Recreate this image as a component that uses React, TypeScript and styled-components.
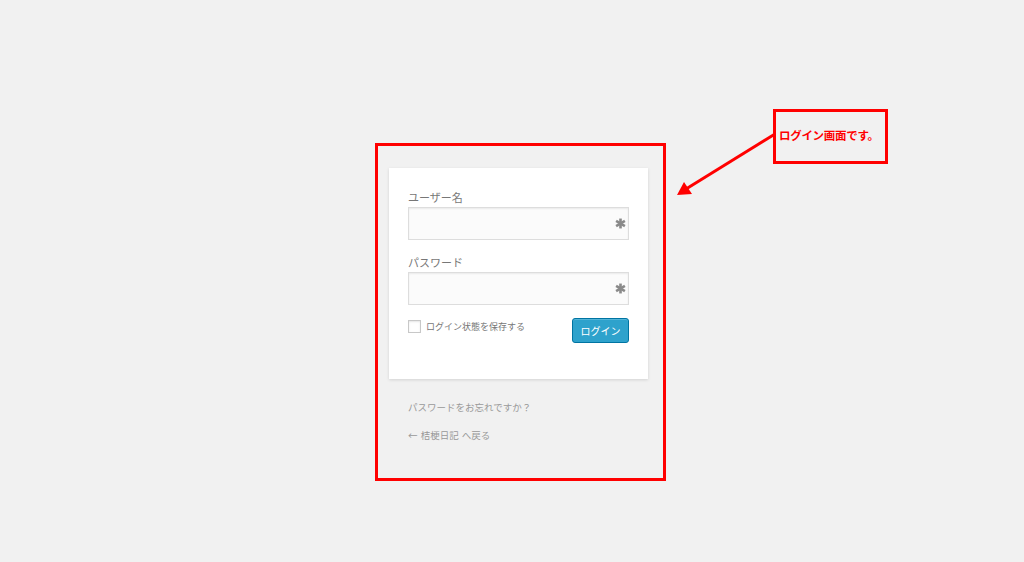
import React from "react";
import styled, { createGlobalStyle } from "styled-components";

const GlobalStyle = createGlobalStyle`
  html, body {
    margin: 0;
    padding: 0;
    background: #f1f1f1;
  }
  body {
    font-family: "Noto Sans CJK JP", "Noto Sans", sans-serif;
  }
`;

const Page = styled.div`
  position: relative;
  width: 1024px;
  height: 562px;
  box-sizing: border-box;
  padding: 143px 0 0 375px;
  background: #f1f1f1;
  overflow: hidden;
`;

const Frame = styled.div`
  width: 291px;
  height: 338px;
  box-sizing: border-box;
  border: 3px solid #ff0000;
  padding: 22px 0 0 11px;
`;

const Card = styled.form`
  width: 259px;
  box-sizing: border-box;
  padding: 22px 19px 36px;
  background: #fff;
  box-shadow: 0 1px 3px rgba(0, 0, 0, 0.13);
  display: flex;
  flex-direction: column;
`;

const Label = styled.label<{ $gap?: number }>`
  display: block;
  margin-top: ${(p) => p.$gap ?? 0}px;
  margin-bottom: 3px;
  font-size: 11px;
  line-height: 14px;
  color: #777;
`;

const Field = styled.div`
  position: relative;
  height: 33px;
`;

const Input = styled.input`
  width: 100%;
  height: 100%;
  box-sizing: border-box;
  margin: 0;
  border: 1px solid #ddd;
  background: #fbfbfb;
  box-shadow: inset 0 1px 2px rgba(0, 0, 0, 0.07);
  outline: none;
`;

const Key = styled.svg`
  position: absolute;
  right: 3px;
  top: 11px;
  width: 11px;
  height: 11px;
`;

const Row = styled.div`
  margin-top: 13px;
  display: flex;
  justify-content: space-between;
  align-items: flex-start;
`;

const Remember = styled.label`
  display: flex;
  align-items: center;
  gap: 5px;
  margin-top: 2px;
  font-size: 9px;
  line-height: 13px;
  color: #777;
`;

const Box = styled.span`
  width: 13px;
  height: 13px;
  box-sizing: border-box;
  border: 1px solid #c8c8c8;
  background: #fff;
  box-shadow: inset 0 1px 2px rgba(0, 0, 0, 0.1);
`;

const Button = styled.button`
  width: 57px;
  height: 25px;
  padding: 0;
  border: 1px solid #0074a2;
  border-radius: 3px;
  background: #2ea2cc;
  box-shadow: inset 0 1px 0 rgba(120, 200, 230, 0.5);
  color: #fff;
  font-family: inherit;
  font-size: 10px;
  cursor: pointer;
`;

const Links = styled.div`
  display: flex;
  flex-direction: column;
  gap: 14px;
  margin-top: 21px;
  padding-left: 19px;
`;

const NavLink = styled.a`
  font-size: 9.5px;
  line-height: 14px;
  color: #999;
  text-decoration: none;
  word-spacing: 1px;
`;

const Callout = styled.div`
  position: absolute;
  left: 773px;
  top: 109px;
  width: 115px;
  height: 55px;
  box-sizing: border-box;
  border: 3px solid #ff0000;
  padding: 16px 0 0 3px;
  font-size: 11.5px;
  font-weight: bold;
  line-height: 14px;
  color: #ff0000;
  letter-spacing: -0.3px;
  white-space: nowrap;
`;

const Arrow = styled.svg`
  position: absolute;
  left: 0;
  top: 0;
  pointer-events: none;
`;

const Asterisk = () => (
  <Key viewBox="0 0 10 10">
    <g stroke="#8a8a8a" strokeWidth="2.4" strokeLinecap="butt">
      <line x1="5" y1="0.5" x2="5" y2="9.5" />
      <line x1="1" y1="2.7" x2="9" y2="7.3" />
      <line x1="1" y1="7.3" x2="9" y2="2.7" />
    </g>
  </Key>
);

export default function App() {
  return (
    <>
      <GlobalStyle />
      <Page>
        <Frame>
          <Card onSubmit={(e) => e.preventDefault()}>
            <Label>ユーザー名</Label>
            <Field>
              <Input type="text" />
              <Asterisk />
            </Field>
            <Label $gap={15}>パスワード</Label>
            <Field>
              <Input type="password" />
              <Asterisk />
            </Field>
            <Row>
              <Remember>
                <Box />
                ログイン状態を保存する
              </Remember>
              <Button type="submit">ログイン</Button>
            </Row>
          </Card>
          <Links>
            <NavLink href="#">パスワードをお忘れですか？</NavLink>
            <NavLink href="#">← 桔梗日記 へ戻る</NavLink>
          </Links>
        </Frame>
        <Callout>ログイン画面です。</Callout>
        <Arrow width="1024" height="562" viewBox="0 0 1024 562">
          <line x1="775" y1="134" x2="686" y2="189" stroke="#ff0000" strokeWidth="3" />
          <polygon points="677,195 684,182 692,194" fill="#ff0000" />
        </Arrow>
      </Page>
    </>
  );
}
